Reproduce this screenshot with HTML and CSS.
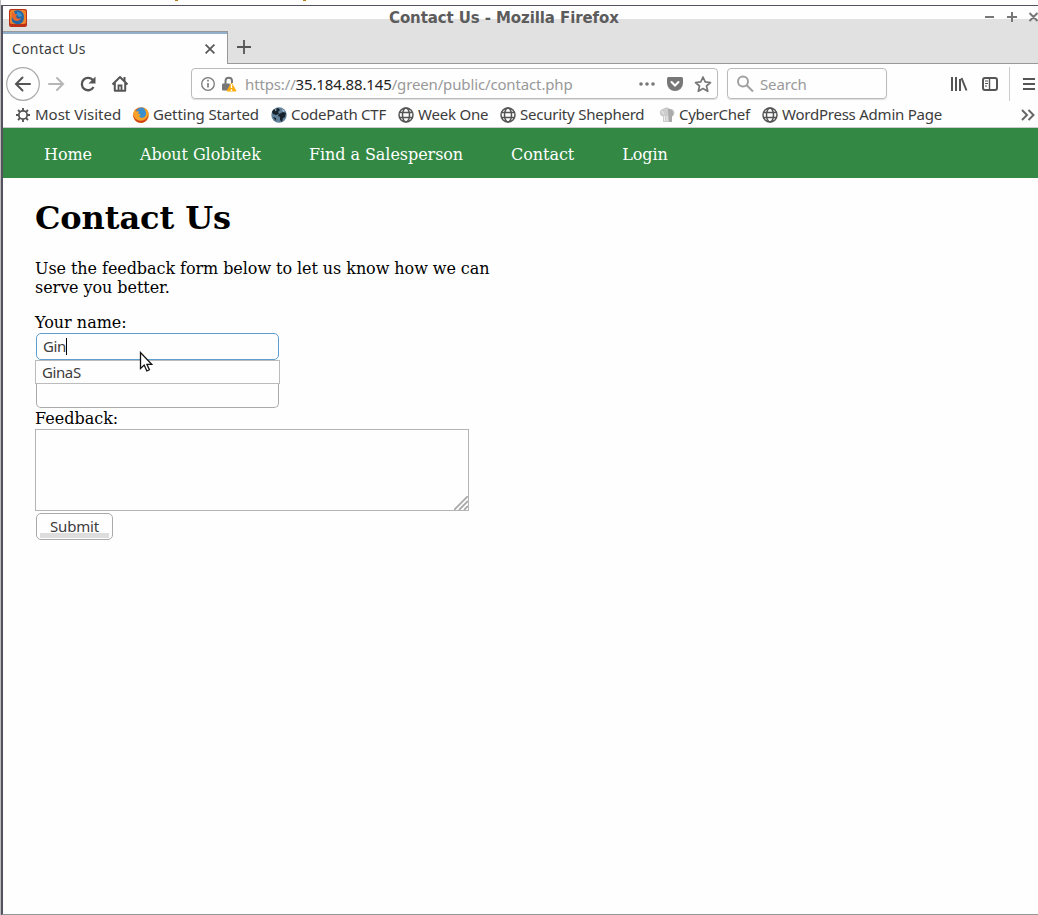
FILE: index.html
```html
<!DOCTYPE html>
<html lang="en">
<head>
<meta charset="utf-8">
<title>Contact Us</title>
<link rel="stylesheet" href="styles.css">
</head>
<body>
<svg class="defs" width="0" height="0">
  <symbol id="globe" viewBox="0 0 16 16"><g fill="none" stroke="#555" stroke-width="1.5"><circle cx="8" cy="8" r="7"/><ellipse cx="8" cy="8" rx="3.5" ry="7"/><path d="M1.5 5.5h13M1.5 10.5h13"/></g></symbol>
  <symbol id="fox" viewBox="0 0 16 16"><circle cx="8" cy="8" r="7.8" fill="#e96a16"/><circle cx="8.500" cy="6" r="5.600" fill="#3b8fce"/><path d="M10 .5c4 1 6 4 5.700 8-.5 4.500-4 7.300-7.700 7.300C3 15.800-.6 11.500.3 6.200L2 2.300l1 2.200 3-.3-.8 2.600 2.800 1-2 1.500c2 2.500 5.500 1.500 6.500-.5 1.300-2.500 0-6-2.500-8.500z" fill="#f7a128"/><path d="M.4 7c.5 5 4.600 7.200 8 6.700 3.300-.4 5.700-2.500 6.700-5.500-.2 4.500-3.500 7.600-7.300 7.600C3.500 15.800 0 12 .4 7z" fill="#cf3e19"/></symbol>
</svg>
<div class="backdrop"><i></i><i></i></div>
<div class="window">
  <header class="titlebar">
    <svg class="app-icon" width="18" height="18" viewBox="0 0 18 18"><rect width="18" height="18" rx="2" fill="#bd3216"/><rect x="1" y="1" width="16" height="14" rx="2" fill="#ee852b"/><path d="M5 2c5-2 10 0 10 6s-4 8-8 7C3 14 2 11 3 8l4 1z" fill="#2867a5"/><path d="M3 3l3 2h2L7 8l2 2 3-1c-1 3-4 4-7 2-2-2-3-5-2-8z" fill="#e7662b"/><path d="M8 3c3 0 5 2 5 4l-3 1-2-2z" fill="#3c93cb"/></svg>
    <div class="title">Contact Us - Mozilla Firefox</div>
    <svg class="controls" width="54" height="12" viewBox="0 0 54 12" fill="none" stroke="#777" stroke-width="2"><path d="M1 6h9M23 6h10M28 1v10M45.500 2l8 8M53.500 2l-8 8"/></svg>
  </header>
  <div class="tabs">
    <div class="tab"><span>Contact Us</span><svg width="10" height="10" viewBox="0 0 10 10" stroke="#555" stroke-width="1.700"><path d="M.6.600l8.800 8.800M9.400.600L.6 9.400"/></svg></div>
    <div class="newtab"><svg width="14" height="14" viewBox="0 0 14 14" stroke="#555" stroke-width="1.800"><path d="M0 7h14M7 0v14"/></svg></div>
  </div>
  <div class="toolbar">
    <svg class="nav-icons" width="130" height="36" viewBox="0 0 130 36" fill="none" stroke="#555" stroke-width="2">
      <circle cx="17" cy="18" r="16.300" stroke="#aaa" stroke-width="1.200"/>
      <path d="M24 18H10.500M16.500 11.500L10 18l6.500 6.500" stroke-linecap="round"/>
      <path d="M43 18h14M51 12l6 6-6 6" stroke="#b6b6b6" stroke-linecap="round"/>
      <path d="M87 14.300A6.200 6.200 0 1 0 87.500 21" stroke-width="2.300"/><path d="M89.500 10.500v7h-7z" fill="#555" stroke="none"/>
      <path d="M106.500 18.500L114 11l7.500 7.500M108.800 17v7.800h10.400V17" stroke-linejoin="round"/><path d="M112.500 24.500v-5h3v5" stroke-width="1.800"/><path d="M118.500 11v4"/>
    </svg>
    <div class="urlbar">
      <svg width="38" height="18" viewBox="0 0 38 18" fill="none" stroke="#777"><circle cx="7" cy="9" r="6.300" stroke-width="1.300"/><path d="M7 8v4.500M7 4.800v1.600" stroke-width="1.600"/><path d="M24.500 9V6c0-4.500 6.500-4.500 6.500 0v2" stroke-width="2"/><rect x="21" y="8.500" width="8" height="7" rx="1" fill="#777" stroke="none"/><path d="M30.500 8l4.500 8h-9z" fill="#ffad0d" stroke="#ffad0d" stroke-linejoin="round"/><path d="M30.500 9v4M30.500 14.300V16" stroke="#fff" stroke-width="1.400"/></svg>
      <span class="url">https://<b>35.184.88.145</b>/green/public/contact.php</span>
      <svg class="page-actions" width="74" height="18" viewBox="0 0 74 18"><g fill="#777"><circle cx="3" cy="9" r="1.800"/><circle cx="9" cy="9" r="1.800"/><circle cx="15" cy="9" r="1.800"/><path d="M30.500 2h13a1.500 1.500 0 0 1 1.500 1.500V8a8 8 0 0 1-16 0V3.500A1.500 1.500 0 0 1 30.500 2z"/></g><path d="M33.500 7l3.500 3.500L40.500 7" fill="none" stroke="#fff" stroke-width="2" stroke-linecap="round"/><path d="M65 2l2.200 4.900 5.300.6-4 3.500 1.200 5.300L65 13.600l-4.700 2.700 1.200-5.300-4-3.500 5.300-.6z" fill="none" stroke="#777" stroke-width="1.700" stroke-linejoin="round"/></svg>
    </div>
    <div class="search"><svg width="17" height="18" viewBox="0 0 17 18" fill="none" stroke="#a0a0a0" stroke-width="2"><circle cx="6" cy="6.500" r="5"/><path d="M9.700 10.200L16 16.500"/></svg><span>Search</span></div>
    <svg class="menu-icons" width="87" height="34" viewBox="0 0 87 34" fill="none" stroke="#555"><path d="M2 10v14M6 10v14M10 12v12M11.500 11l5 12.500" stroke-width="2"/><rect x="33" y="11" width="14" height="12" rx="2" stroke-width="2"/><path d="M39.500 11v12" stroke-width="1.400"/><path d="M35 14h3M35 16.500h3M35 19h2" stroke-width="1"/><path d="M59.500 0v34" stroke="#ccc"/><path d="M73 12h12M73 17h12M73 22h12" stroke-width="2"/></svg>
  </div>
  <nav class="bookmarks">
    <div class="bm b1"><svg width="16" height="16" viewBox="0 0 16 16" fill="none" stroke="#555"><circle cx="8" cy="8" r="4.200" stroke-width="1.800"/><path d="M8 1v3M8 12v3M1 8h3M12 8h3M3 3l2.200 2.200M10.800 10.800L13 13M3 13l2.200-2.200M10.800 5.200L13 3" stroke-width="1.900"/></svg><span>Most Visited</span></div>
    <div class="bm b2"><svg width="16" height="16"><use href="#fox"/></svg><span>Getting Started</span></div>
    <div class="bm b3"><svg width="16" height="16" viewBox="0 0 16 16"><circle cx="8" cy="8" r="7.700" fill="#607f99"/><path d="M2 3l5-2 2 2-2 2 1 2-3 1-3-1-1-2zM8 7l4-2 3 1-1 4-2 1-1 4-2-2v-3l-2-1zM2 10l3 1v3z" fill="#17222d"/><path d="M4 2l2 1-2 1M11 2l3 2-2 1" fill="#abc4d8"/></svg><span>CodePath CTF</span></div>
    <div class="bm b4"><svg width="16" height="16"><use href="#globe"/></svg><span>Week One</span></div>
    <div class="bm b5"><svg width="16" height="16"><use href="#globe"/></svg><span>Security Shepherd</span></div>
    <div class="bm b6"><svg width="16" height="16" viewBox="0 0 16 16"><path d="M4 15V9.500C-.5 9 0 2 4 2c2-2 5-2 7 0 5-1 6 6 2 7.500V15z" fill="#ccc"/><path d="M9 2c5-1 7 5 4 7.500V15h-3z" fill="#aaa"/><path d="M5.500 9v5M8 9v5M3 4l2 3" stroke="#eee" fill="none"/></svg><span>CyberChef</span></div>
    <div class="bm b7"><svg width="16" height="16"><use href="#globe"/></svg><span>WordPress Admin Page</span></div>
    <svg class="more" width="14" height="12" viewBox="0 0 14 12" fill="none" stroke="#666" stroke-width="2"><path d="M1 1l5 5-5 5M7.500 1l5 5-5 5"/></svg>
  </nav>
  <nav class="site-nav"><a>Home</a><a>About Globitek</a><a>Find a Salesperson</a><a>Contact</a><a>Login</a></nav>
  <main>
    <h1>Contact Us</h1>
    <p>Use the feedback form below to let us know how we can<br>serve you better.</p>
    <form>
      <label>Your name:</label>
      <div class="field focused"><span>Gin</span><i class="caret"></i>
        <svg class="pointer" width="14" height="22" viewBox="0 0 14 22"><path d="M1.500 1.500v16l3.700-3.500 2.600 6 2.600-1.200-2.500-5.500h4.800z" fill="#fff" stroke="#111" stroke-width="1.300"/></svg>
      </div>
      <div class="suggestions"><span>GinaS</span></div>
      <div class="field second"></div>
      <label>Feedback:</label>
      <div class="textarea"><svg width="14" height="14" viewBox="0 0 14 14" stroke="#aaa" stroke-width="1.800"><path d="M0 14L14 0M5 14l9-9M10 14l4-4"/></svg></div>
      <div class="submit"><span>Submit</span></div>
    </form>
  </main>
</div>
</body>
</html>
```
FILE: styles.css
```css
* { box-sizing: border-box; }
body { margin: 0; width: 1038px; height: 915px; overflow: hidden; background: #fefefe; font: 15px/18px "Noto Sans", sans-serif; color: #3c3c3c; display: flex; flex-direction: column; }
svg { display: block; flex: none; }
.defs { position: absolute; }
.backdrop { height: 5px; flex: none; display: flex; gap: 125px; padding-left: 174px; border-left: 1px solid #bbb; }
.backdrop i { width: 3px; height: 1px; background: #b87920; }
.window { height: 910px; border: solid #55515f; border-width: 1px 0 1px 2px; border-bottom-color: #969696; margin-left: 1px; box-shadow: -1px 0 #bbb; background: #fefefe; }
.titlebar { height: 25px; background: linear-gradient(#fefefe 13px, #e1e1e1 13px); display: flex; padding-left: 6px; }
.titlebar > * { flex: none; }
.app-icon { margin-top: 3px; }
.title { width: 230px; margin: 3px 0 0 362px; white-space: nowrap; font: bold 15px/18px "DejaVu Sans", sans-serif; letter-spacing: -0.1px; color: #5c5c5c; }
.controls { margin: 5px 0 0 365px; }
.tabs { height: 33px; background: #e1e1e1; border-bottom: 1px solid #999; display: flex; }
.tab { width: 225px; height: 33px; background: #fefefe; border: solid #999; border-width: 1px 1px 0 0; box-shadow: inset 0 2px #91aeca; padding: 1px 12px 0 9px; display: flex; align-items: center; justify-content: space-between; font-size: 14px; letter-spacing: 0.25px; }
.newtab { padding: 9px; }
.toolbar { height: 40px; display: flex; padding: 3px 0 0 3px; }
.nav-icons { margin-top: -1px; }
.urlbar, .search { height: 31px; margin-top: 1px; border: 1px solid #bbb; border-radius: 4px; box-shadow: 0 1px 1px #ddd; display: flex; align-items: center; }
.urlbar { width: 527px; margin-left: 55px; padding: 0 5px 0 9px; color: #999; }
.urlbar .url { margin-left: 6px; white-space: nowrap; letter-spacing: -0.14px; }
.urlbar b { font-weight: 400; color: #222; letter-spacing: -0.14px; }
.page-actions { margin-left: auto; }
.search { width: 160px; margin-left: 9px; padding-left: 9px; color: #999; gap: 6px; letter-spacing: -0.15px; }
.menu-icons { margin-left: 63px; }
.bookmarks { height: 24px; padding: 3px 0 0 12px; border-bottom: 1px solid #ccc; display: flex; }
.bm { display: flex; gap: 4px; height: 16px; line-height: 14px; white-space: nowrap; flex: none; }
.b1 { width: 118px; }
.b2 { width: 138px; letter-spacing: -0.13px; }
.b3 { width: 127px; letter-spacing: -0.25px; }
.b4 { width: 102px; letter-spacing: -0.2px; }
.b5 { width: 159px; letter-spacing: -0.23px; }
.b6 { width: 103px; letter-spacing: -0.28px; }
.b7 { width: 259px; letter-spacing: -0.23px; }
.more { margin-top: 2px; }
.site-nav { height: 50px; background: #338844; color: #fff; display: flex; gap: 48px; padding: 17px 0 0 41px; font: 16px/19px "DejaVu Serif", serif; letter-spacing: -0.06px; }
main { padding: 21px 0 0 32px; color: #000; font: 16px/19px "DejaVu Serif", serif; letter-spacing: -0.065px; }
h1 { margin: 0 0 22px; font-size: 32px; line-height: 38px; letter-spacing: -0.1px; }
p { margin: 0 0 16px; }
label { display: block; height: 19px; letter-spacing: 0; }
.field { width: 243px; height: 27px; margin: 1px 0 0 1px; border: 1px solid #aaa; border-radius: 5px; padding: 3px 6px; display: flex; position: relative; font: 15px/18px "Noto Sans", sans-serif; color: #3c3c3c; letter-spacing: -0.4px; }
.focused { border-color: #5f9fd0; }
.caret { width: 1px; height: 17px; margin-top: 1px; background: #000; }
.pointer { position: absolute; left: 102px; top: 17px; z-index: 2; }
.suggestions { width: 245px; height: 24px; border: 1px solid #bbb; background: #fefefe; padding: 2px 6px; font: 15px/18px "Noto Sans", sans-serif; letter-spacing: -0.4px; color: #3c3c3c; }
.second { height: 24px; margin-top: 0; border-top: 0; border-radius: 0 0 5px 5px; margin-bottom: 1px; }
.textarea { width: 434px; height: 82px; margin-top: 1px; border: 1px solid #b4b4b4; display: flex; justify-content: flex-end; align-items: flex-end; }
.submit { width: 77px; height: 27px; margin: 2px 0 0 1px; border: 1px solid #aaa; border-radius: 5px; background: linear-gradient(#ddd, #ddd) 3px 19px / 69px 5px no-repeat; display: flex; justify-content: center; padding-top: 3px; font: 15px/18px "Noto Sans", sans-serif; letter-spacing: -0.15px; color: #3c3c3c; }
```
